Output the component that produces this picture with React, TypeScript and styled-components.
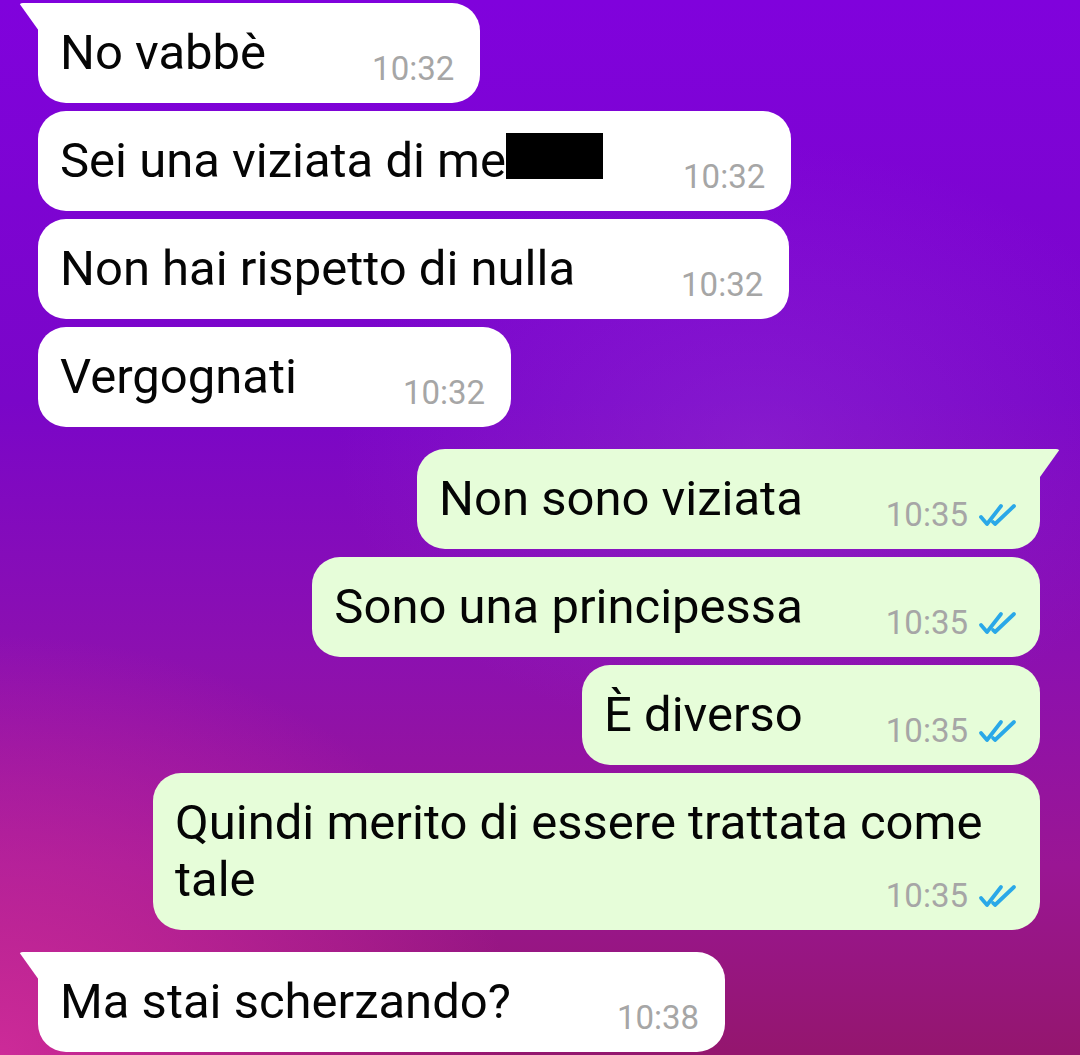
import React, { FC } from 'react';
import styled, { createGlobalStyle } from 'styled-components';

type Message = {
  text: string;
  time: string;
  out?: boolean;
  tail?: boolean;
  redacted?: boolean;
  gap?: number;
};

const messages: Message[] = [
  { text: 'No vabbè', time: '10:32', tail: true },
  { text: 'Sei una viziata di me', time: '10:32', redacted: true, gap: 80 },
  { text: 'Non hai rispetto di nulla', time: '10:32' },
  { text: 'Vergognati', time: '10:32' },
  { text: 'Non sono viziata', time: '10:35', out: true, tail: true },
  { text: 'Sono una principessa', time: '10:35', out: true },
  { text: 'È diverso', time: '10:35', out: true },
  { text: 'Quindi merito di essere trattata come tale', time: '10:35', out: true },
  { text: 'Ma stai scherzando?', time: '10:38', tail: true },
];

const GlobalStyle = createGlobalStyle`
  html, body {
    margin: 0;
    padding: 0;
    height: 1055px;
    overflow: hidden;
  }
  body {
    font-family: Roboto, "Liberation Sans", sans-serif;
  }
`;

const ReadTicks: FC = () => (
  <svg width="40" height="24" viewBox="0 0 40 24" fill="none">
    <path d="M3 14 L9 21 L23 3" stroke="#2aa8e8" strokeWidth="3.8" strokeLinecap="round" strokeLinejoin="round" />
    <path d="M15 19 L17 21 L36 3" stroke="#2aa8e8" strokeWidth="3.8" strokeLinecap="round" strokeLinejoin="round" />
  </svg>
);

const App: FC = () => (
  <>
    <GlobalStyle />
    <Screen>
      <Chat>
        {messages.map((m, i) => {
          const prev = messages[i - 1];
          const newGroup = i > 0 && prev.out !== m.out;
          return (
            <Bubble key={i} $out={!!m.out} $tail={!!m.tail} $newGroup={newGroup}>
              {m.text}
              {m.redacted && <Redaction />}
              <Meta $gap={m.gap ?? (m.out ? 83 : 106)}>
                <Time>{m.time}</Time>
                {m.out && <ReadTicks />}
              </Meta>
            </Bubble>
          );
        })}
      </Chat>
    </Screen>
  </>
);

const Screen = styled.div`
  width: 1080px;
  height: 1055px;
  overflow: hidden;
  background:
    radial-gradient(ellipse 520px 420px at 0% 100%, rgba(214, 46, 160, 0.85) 0%, rgba(214, 46, 160, 0) 100%),
    radial-gradient(ellipse 420px 300px at 70% 42%, rgba(160, 70, 220, 0.3) 0%, rgba(160, 70, 220, 0) 100%),
    linear-gradient(180deg, #8002dc 0%, #7a06c8 38%, #8c10b0 62%, #9a1694 82%, #94166e 100%);
`;

const Chat = styled.div`
  display: flex;
  flex-direction: column;
  gap: 8px;
  padding: 3px 40px 0 38px;
`;

const Bubble = styled.div<{ $out: boolean; $tail: boolean; $newGroup: boolean }>`
  position: relative;
  align-self: ${(p) => (p.$out ? 'flex-end' : 'flex-start')};
  box-sizing: border-box;
  max-width: 887px;
  margin-top: ${(p) => (p.$newGroup ? '14px' : '0')};
  padding: 21px ${(p) => (p.$out ? '22px' : '26px')} 14px 22px;
  border-radius: 28px;
  ${(p) => p.$tail && (p.$out ? 'border-top-right-radius: 0;' : 'border-top-left-radius: 0;')}
  background: ${(p) => (p.$out ? '#e6fdd9' : '#ffffff')};
  color: #050505;
  font-family: Roboto, "Liberation Sans", sans-serif;
  font-size: 49px;
  line-height: 57px;

  &::before {
    content: '';
    display: ${(p) => (p.$tail ? 'block' : 'none')};
    position: absolute;
    top: 0;
    ${(p) => (p.$out ? 'right: -20px;' : 'left: -19px;')}
    width: 20px;
    height: 28px;
    background: inherit;
    border-radius: ${(p) => (p.$out ? '0 4px 0 0' : '4px 0 0 0')};
    clip-path: ${(p) =>
      p.$out ? 'polygon(0 0, 100% 0, 0 100%)' : 'polygon(0 0, 100% 0, 100% 100%)'};
  }
`;

const Redaction = styled.span`
  display: inline-block;
  width: 97px;
  height: 46px;
  vertical-align: -2px;
  background: #000;
`;

const Meta = styled.span<{ $gap: number }>`
  float: right;
  display: flex;
  align-items: center;
  gap: 10px;
  margin-left: ${(p) => p.$gap}px;
  margin-top: 25px;
  height: 40px;
`;

const Time = styled.span`
  font-size: 33px;
  line-height: 40px;
  color: #a6a6a6;
`;

export default App;
